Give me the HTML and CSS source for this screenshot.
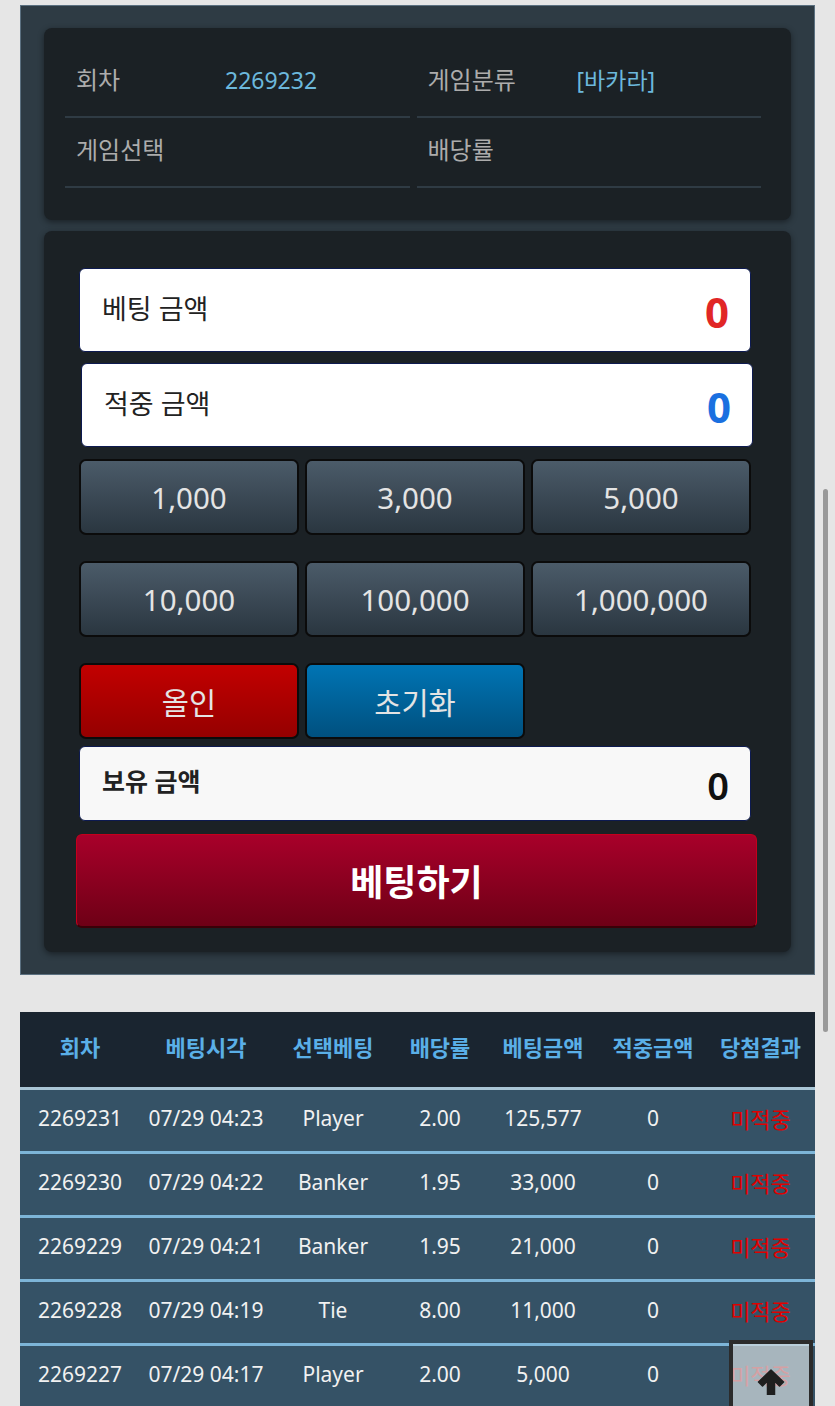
FILE: index.html
```html
<!DOCTYPE html>
<html lang="ko">
<head>
    <meta charset="UTF-8">
    <meta name="viewport" content="width=device-width, initial-scale=1.0">
    <title>바카라 베팅</title>
    <link rel="stylesheet" href="styles.css">
</head>
<body>

    <div class="bet-panel">
        <!-- 게임 정보 -->
        <div class="card info-card">
            <div class="info-cell"><span class="info-label">회차</span><span class="info-value">2269232</span></div>
            <div class="info-cell"><span class="info-label">게임분류</span><span class="info-value">[바카라]</span></div>
            <div class="info-cell"><span class="info-label">게임선택</span><span class="info-value"></span></div>
            <div class="info-cell"><span class="info-label">배당률</span><span class="info-value"></span></div>
        </div>

        <!-- 베팅 입력 -->
        <div class="card bet-card">
            <div class="amount-box">
                <span class="amount-label">베팅 금액</span>
                <span class="amount-value red">0</span>
            </div>
            <div class="amount-box shifted">
                <span class="amount-label">적중 금액</span>
                <span class="amount-value blue">0</span>
            </div>

            <div class="chip-grid">
                <button class="chip">1,000</button>
                <button class="chip">3,000</button>
                <button class="chip">5,000</button>
                <button class="chip">10,000</button>
                <button class="chip">100,000</button>
                <button class="chip">1,000,000</button>
                <button class="chip allin">올인</button>
                <button class="chip reset">초기화</button>
            </div>

            <div class="amount-box balance">
                <span class="amount-label">보유 금액</span>
                <span class="amount-value">0</span>
            </div>

            <button class="bet-button">베팅하기</button>
        </div>
    </div>

    <!-- 베팅 내역 -->
    <table class="history">
        <thead>
            <tr>
                <th class="c-round">회차</th>
                <th class="c-time">베팅시각</th>
                <th class="c-pick">선택베팅</th>
                <th class="c-odds">배당률</th>
                <th class="c-bet">베팅금액</th>
                <th class="c-win">적중금액</th>
                <th class="c-result">당첨결과</th>
            </tr>
        </thead>
        <tbody>
            <tr><td>2269231</td><td>07/29 04:23</td><td>Player</td><td>2.00</td><td>125,577</td><td>0</td><td class="lose">미적중</td></tr>
            <tr><td>2269230</td><td>07/29 04:22</td><td>Banker</td><td>1.95</td><td>33,000</td><td>0</td><td class="lose">미적중</td></tr>
            <tr><td>2269229</td><td>07/29 04:21</td><td>Banker</td><td>1.95</td><td>21,000</td><td>0</td><td class="lose">미적중</td></tr>
            <tr><td>2269228</td><td>07/29 04:19</td><td>Tie</td><td>8.00</td><td>11,000</td><td>0</td><td class="lose">미적중</td></tr>
            <tr><td>2269227</td><td>07/29 04:17</td><td>Player</td><td>2.00</td><td>5,000</td><td>0</td><td class="lose">미적중</td></tr>
        </tbody>
    </table>

    <!-- 맨 위로 -->
    <a class="to-top" href="#">
        <svg width="28" height="26" viewBox="0 0 28 26">
            <path d="M14 1 L26.5 13 L22.5 17 L17.5 12 L17.5 26 L10.5 26 L10.5 12 L5.5 17 L1.5 13 Z" fill="#1f1f1f" stroke="#1f1f1f" stroke-width="1.5" stroke-linejoin="round"/>
        </svg>
    </a>

    <div class="scroll-thumb"></div>

</body>
</html>
```

FILE: styles.css
```css
* {
    box-sizing: border-box;
}

html {
    overflow: hidden;
}

body {
    margin: 5px 20px 0;
    background: #e6e6e6;
    font-family: 'Noto Sans', 'Noto Sans CJK KR', sans-serif;
}

/* 바깥 패널 */
.bet-panel {
    background: #2e3b44;
    border: 1px solid #5b7080;
    padding: 22px 23px;
}

.card {
    background: #1b2125;
    border-radius: 8px;
    box-shadow: 0 2px 6px rgba(0, 0, 0, 0.45);
}

/* 게임 정보 카드 */
.info-card {
    display: grid;
    grid-template-columns: 1fr 1fr;
    column-gap: 7px;
    padding: 20px 30px 32px 21px;
}

.info-cell {
    display: flex;
    align-items: center;
    height: 70px;
    padding: 18px 0 22px 11px;
    line-height: 28px;
    border-bottom: 2px solid #2f3b44;
}

.info-label {
    width: 149px;
    font-size: 24px;
    color: #acacac;
}

.info-value {
    font-size: 23px;
    color: #6cb8dc;
}

/* 베팅 카드 */
.bet-card {
    margin-top: 11px;
    padding: 37px 40px 24px 35px;
}

.amount-box {
    display: flex;
    justify-content: space-between;
    align-items: center;
    height: 84px;
    padding: 0 21px 6px 22px;
    background: #ffffff;
    border: 1px solid #0d1a50;
    border-radius: 6px;
    margin-bottom: 11px;
}

.amount-box.shifted {
    margin-left: 2px;
    margin-right: -2px;
    margin-bottom: 12px;
}

.amount-label {
    font-size: 27px;
    color: #222;
}

.amount-value {
    font-size: 42px;
    font-weight: bold;
    line-height: 1;
    padding-top: 10px;
}

.amount-value.red {
    color: #e12626;
}

.amount-value.blue {
    color: #1a70e0;
}

.chip-grid {
    display: grid;
    grid-template-columns: repeat(3, 1fr);
    column-gap: 6px;
    row-gap: 26px;
}

.chip {
    height: 76px;
    font-family: inherit;
    font-size: 29.5px;
    color: #e4e4e4;
    background: linear-gradient(to bottom, #4b5b69, #2a3640);
    border: 2px solid #0b0b0b;
    border-radius: 7px;
    padding: 0;
    cursor: pointer;
}

.chip.allin {
    background: linear-gradient(to bottom, #c20000, #950000);
}

.chip.reset {
    background: linear-gradient(to bottom, #0074b4, #00507f);
}

.amount-box.balance {
    margin-top: 7px;
    margin-bottom: 13px;
    height: 75px;
    background: #f8f8f8;
    padding-bottom: 2px;
}

.balance .amount-label {
    font-size: 25px;
    font-weight: bold;
    padding-bottom: 6px;
}

.balance .amount-value {
    font-size: 38px;
    font-weight: 600;
    color: #111;
    padding-top: 4px;
}

.bet-button {
    display: block;
    width: calc(100% + 9px);
    height: 94px;
    margin-left: -3px;
    font-family: inherit;
    font-size: 36px;
    font-weight: bold;
    color: #fff;
    background: linear-gradient(to bottom, #a8002a, #6e0016);
    border: 1px solid #c4001c;
    border-bottom: 2px solid #3a0008;
    border-radius: 6px;
    cursor: pointer;
}

/* 베팅 내역 */
.history {
    width: 795px;
    margin-top: 37px;
    border-collapse: separate;
    border-spacing: 0;
    table-layout: fixed;
    text-align: center;
}

.history th {
    height: 78px;
    background: #1a2530;
    color: #5aafe7;
    font-size: 22px;
    font-weight: bold;
    border-bottom: 3px solid #a9c6d6;
    padding: 0 0 8px;
}

.history td {
    height: 64px;
    background: #355266;
    color: #f1f1f1;
    font-size: 21px;
    border-bottom: 3px solid #7db5d8;
    padding: 0 0 6px;
}

.history td.lose {
    color: #e00000;
    font-size: 22px;
}

.c-round { width: 120px; }
.c-time { width: 132px; }
.c-pick { width: 122px; }
.c-odds { width: 92px; }
.c-bet { width: 114px; }
.c-win { width: 106px; }
.c-result { width: 109px; }

/* 맨 위로 버튼 */
.to-top {
    position: fixed;
    right: 22px;
    bottom: -14px;
    width: 84px;
    height: 80px;
    border: 4px solid #2b2b2b;
    background: rgba(208, 216, 220, 0.74);
    display: flex;
    justify-content: center;
    padding-top: 25px;
}

.scroll-thumb {
    position: fixed;
    right: 7px;
    top: 489px;
    width: 5px;
    height: 543px;
    background: #999;
    border-radius: 3px;
}
```
